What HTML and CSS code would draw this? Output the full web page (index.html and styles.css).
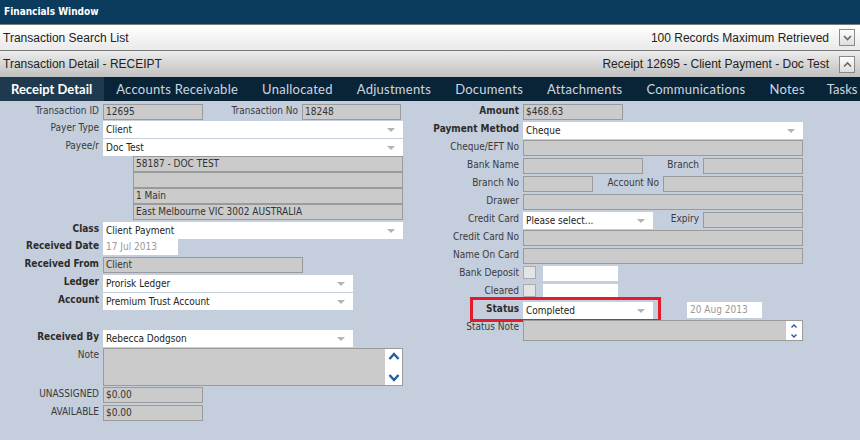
FILE: index.html
```html
<!DOCTYPE html>
<html>
<head>
<meta charset="utf-8">
<link rel="stylesheet" href="styles.css">
</head>
<body>
<div class="app">
  <div class="title">Financials Window</div>
  <div class="bar bar-search">
    <span class="bar-text">Transaction Search List</span>
    <span class="bar-right">100 Records Maximum Retrieved
      <span class="tog"><svg width="13" height="13" viewBox="0 0 13 13"><path d="M3 5 L6.5 8.5 L10 5" fill="none" stroke="#666" stroke-width="1.6"/></svg></span>
    </span>
  </div>
  <div class="bar bar-detail">
    <span class="bar-text">Transaction Detail - RECEIPT</span>
    <span class="bar-right">Receipt 12695 - Client Payment - Doc Test
      <span class="tog"><svg width="13" height="13" viewBox="0 0 13 13"><path d="M3 8.5 L6.5 5 L10 8.5" fill="none" stroke="#666" stroke-width="1.6"/></svg></span>
    </span>
  </div>
  <nav class="tabs">
    <span class="tab active">Receipt Detail</span>
    <span class="tab">Accounts Receivable</span>
    <span class="tab">Unallocated</span>
    <span class="tab">Adjustments</span>
    <span class="tab">Documents</span>
    <span class="tab">Attachments</span>
    <span class="tab">Communications</span>
    <span class="tab">Notes</span>
    <span class="tab last">Tasks</span>
  </nav>
  <div class="content">
    <div class="col">
      <div class="row tight">
        <label class="lbl">Transaction ID</label>
        <div class="fld w100">12695</div>
        <label class="lbl w99">Transaction No</label>
        <div class="fld w99f">18248</div>
      </div>
      <div class="row">
        <label class="lbl">Payer Type</label>
        <div class="sel w300">Client<i class="arr"></i></div>
      </div>
      <div class="row tight">
        <label class="lbl">Payee/r</label>
        <div class="sel w300">Doc Test<i class="arr"></i></div>
      </div>
      <div class="addr">
        <div class="fld aline">58187 - DOC TEST</div>
        <div class="fld aline"></div>
        <div class="fld aline">1 Main</div>
        <div class="fld aline">East Melbourne VIC 3002 AUSTRALIA</div>
      </div>
      <div class="row tight">
        <label class="lbl b">Class</label>
        <div class="sel w300">Client Payment<i class="arr"></i></div>
      </div>
      <div class="row">
        <label class="lbl b">Received Date</label>
        <div class="date w75">17 Jul 2013</div>
      </div>
      <div class="row">
        <label class="lbl b">Received From</label>
        <div class="fld w200">Client</div>
      </div>
      <div class="row">
        <label class="lbl b">Ledger</label>
        <div class="sel w250">Prorisk Ledger<i class="arr"></i></div>
      </div>
      <div class="row">
        <label class="lbl b">Account</label>
        <div class="sel w250">Premium Trust Account<i class="arr"></i></div>
      </div>
      <div class="row gap-top">
        <label class="lbl b">Received By</label>
        <div class="sel w250">Rebecca Dodgson<i class="arr"></i></div>
      </div>
      <div class="row tall">
        <label class="lbl">Note</label>
        <div class="fld w300 area note">
          <span class="scroll big">
            <svg width="12" height="34" viewBox="0 0 12 34"><path d="M1.5 9 L6 4 L10.5 9" fill="none" stroke="#1d5ca8" stroke-width="2.4"/><path d="M1.5 25 L6 30 L10.5 25" fill="none" stroke="#1d5ca8" stroke-width="2.4"/></svg>
          </span>
        </div>
      </div>
      <div class="row short">
        <label class="lbl">UNASSIGNED</label>
        <div class="fld w100">$0.00</div>
      </div>
      <div class="row short">
        <label class="lbl">AVAILABLE</label>
        <div class="fld w100">$0.00</div>
      </div>
    </div>
    <div class="col">
      <div class="row">
        <label class="lbl b">Amount</label>
        <div class="fld w100">$468.63</div>
      </div>
      <div class="row">
        <label class="lbl b">Payment Method</label>
        <div class="sel w280">Cheque<i class="arr"></i></div>
      </div>
      <div class="row">
        <label class="lbl">Cheque/EFT No</label>
        <div class="fld w280"></div>
      </div>
      <div class="row">
        <label class="lbl">Bank Name</label>
        <div class="fld w120"></div>
        <label class="lbl w60">Branch</label>
        <div class="fld w100"></div>
      </div>
      <div class="row">
        <label class="lbl">Branch No</label>
        <div class="fld w70"></div>
        <label class="lbl w70">Account No</label>
        <div class="fld w140"></div>
      </div>
      <div class="row">
        <label class="lbl">Drawer</label>
        <div class="fld w280"></div>
      </div>
      <div class="row">
        <label class="lbl">Credit Card</label>
        <div class="sel w130">Please select...<i class="arr"></i></div>
        <label class="lbl w50">Expiry</label>
        <div class="fld w100"></div>
      </div>
      <div class="row">
        <label class="lbl">Credit Card No</label>
        <div class="fld w280"></div>
      </div>
      <div class="row">
        <label class="lbl">Name On Card</label>
        <div class="fld w280"></div>
      </div>
      <div class="row">
        <label class="lbl">Bank Deposit</label>
        <span class="chk"></span>
        <div class="wbox"></div>
      </div>
      <div class="row">
        <label class="lbl">Cleared</label>
        <span class="chk"></span>
        <div class="wbox"></div>
      </div>
      <div class="row status">
        <label class="lbl b">Status</label>
        <div class="sel w130">Completed<i class="arr"></i></div>
        <div class="date w75 sdate">20 Aug 2013</div>
        <span class="hilite"></span>
      </div>
      <div class="row snote">
        <label class="lbl">Status Note</label>
        <div class="fld w280 area">
          <span class="scroll small">
            <svg width="8" height="18" viewBox="0 0 8 18"><path d="M1.5 5.5 L4 3 L6.5 5.5" fill="none" stroke="#1d5ca8" stroke-width="1.4"/><path d="M1.5 12.5 L4 15 L6.5 12.5" fill="none" stroke="#1d5ca8" stroke-width="1.4"/></svg>
          </span>
        </div>
      </div>
    </div>
  </div>
</div>
</body>
</html>
```

FILE: styles.css
```css
html, body {
  margin: 0;
  padding: 0;
}
body {
  width: 860px;
  height: 440px;
  overflow: hidden;
  background: #c5cedc;
}
.app {
  width: 860px;
  height: 440px;
  display: flex;
  flex-direction: column;
}
.title {
  height: 24px;
  background: #0b3c5d;
  color: #fff;
  font-family: "DejaVu Sans Condensed", "DejaVu Sans", sans-serif;
  font-weight: bold;
  font-size: 10px;
  line-height: 23px;
  padding-left: 4px;
  border-bottom: 1px solid #7d7d7d;
}
.bar {
  display: flex;
  justify-content: space-between;
  align-items: center;
  font-family: "Liberation Sans", Arial, sans-serif;
  font-size: 12px;
  color: #222;
  padding-left: 3px;
  padding-right: 5px;
}
.bar-search {
  height: 25px;
  background: linear-gradient(#ffffff, #e9e9e9);
  border-bottom: 1px solid #7a7a7a;
}
.bar-detail {
  height: 26px;
  background: linear-gradient(#ececec, #c0c0c0);
}
.bar-right {
  display: flex;
  align-items: center;
  gap: 10px;
}
.tog {
  width: 14px;
  height: 15px;
  border: 1px solid #8a8a8a;
  background: linear-gradient(#fdfdfd, #dedede);
  display: flex;
  align-items: center;
  justify-content: center;
}
.tabs {
  height: 24px;
  background: #0a2437;
  display: flex;
  font-family: Lato, "Open Sans", sans-serif;
  font-size: 13px;
  overflow: hidden;
}
.tab {
  padding: 0 12px;
  line-height: 24px;
  color: #ccd7e0;
  white-space: nowrap;
  letter-spacing: 0.25px;
}
.tab.active {
  background: #1f3a4f;
  color: #fff;
  font-weight: bold;
  letter-spacing: 0;
  padding: 0 12px 0 11px;
}
.tab.last {
  padding: 0 0 0 10px;
  letter-spacing: 0;
}
.content {
  flex: 1;
  display: flex;
  padding-top: 3px;
  background: #c5cedc;
  font-family: "DejaVu Sans Condensed", "DejaVu Sans", sans-serif;
  font-size: 10px;
  color: #333;
}
.col {
  width: 420px;
  display: flex;
  flex-direction: column;
}
.row {
  display: flex;
  align-items: flex-start;
  height: 16px;
  margin-bottom: 2px;
  position: relative;
}
.row.tight { margin-bottom: 1px; }
.row.gap-top { margin-top: 19px; }
.row.tall { height: 38px; margin-bottom: 1px; }
.row.short { height: 15px; margin-bottom: 3px; }
.row.snote { height: 21px; }
.lbl {
  width: 103px;
  flex: none;
  box-sizing: border-box;
  padding-right: 4px;
  text-align: right;
  line-height: 13px;
  color: #3a3a3a;
  white-space: nowrap;
}
.lbl.b { font-weight: bold; color: #2c2c2c; }
.lbl.w99 { width: 99px; }
.lbl.w60 { width: 60px; }
.lbl.w70 { width: 70px; }
.lbl.w50 { width: 50px; }
.fld, .sel, .date, .wbox {
  box-sizing: border-box;
  height: 16px;
  line-height: 15px;
  padding-left: 3px;
  white-space: nowrap;
  overflow: hidden;
  flex: none;
}
.fld {
  background: #cbcbcb;
  border: 1px solid #9a9a9a;
  color: #333;
  line-height: 14px;
  padding-left: 2px;
}
.sel {
  background: #fff;
  position: relative;
  color: #222;
  line-height: 17px;
  height: 17px;
}
.arr {
  position: absolute;
  right: 8px;
  top: 7px;
  width: 0;
  height: 0;
  border-left: 4px solid transparent;
  border-right: 4px solid transparent;
  border-top: 4px solid #b4b4b4;
}
.date {
  background: #fff;
  color: #9a9a9a;
  line-height: 16px;
}
.w70 { width: 70px; }
.w75 { width: 75px; }
.w99f { width: 99px; }
.w100 { width: 100px; }
.w120 { width: 120px; }
.w130 { width: 130px; }
.w140 { width: 140px; }
.w200 { width: 200px; }
.w250 { width: 250px; }
.w280 { width: 280px; }
.w300 { width: 300px; }
.addr {
  margin-left: 133px;
  display: flex;
  flex-direction: column;
  margin-bottom: 2px;
}
.aline {
  width: 270px;
  height: 16px;
}
.area {
  height: 100%;
  position: relative;
}
.scroll {
  position: absolute;
  right: 0;
  top: 0;
  bottom: 0;
  background: #fff;
  display: flex;
  align-items: center;
  justify-content: center;
}
.scroll.big { width: 17px; }
.scroll.small { width: 16px; }
.chk {
  box-sizing: border-box;
  width: 13px;
  height: 13px;
  background: #e4e4e4;
  border: 1px solid #aaa;
  flex: none;
}
.wbox {
  background: #fff;
  width: 75px;
  height: 15px;
  margin-left: 7px;
}
.sdate { margin-left: 34px; }
.hilite {
  position: absolute;
  left: 50px;
  top: -5px;
  width: 191px;
  height: 25px;
  box-sizing: border-box;
  border: 3px solid #e31b2a;
}
```
